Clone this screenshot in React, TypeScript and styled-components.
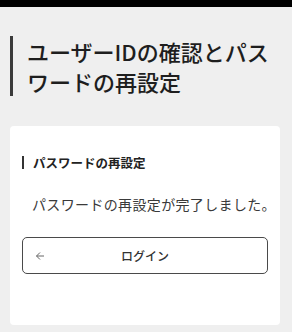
import React from 'react';
import styled, { createGlobalStyle } from 'styled-components';

const GlobalStyle = createGlobalStyle`
  html, body {
    margin: 0;
    padding: 0;
    background: #efefef;
    font-family: "Noto Sans CJK JP", "Noto Sans", sans-serif;
    color: #222222;
  }
`;

const TopBar = styled.div`
  height: 7px;
  background: #000000;
`;

const Page = styled.main`
  padding: 29px 12px 10px 10px;
`;

const PageTitle = styled.h1`
  margin: 0;
  padding-left: 14px;
  border-left: 3px solid #3a3a3a;
  font-size: 22px;
  font-weight: 500;
  line-height: 30px;
  color: #1e1e1e;
`;

const Card = styled.section`
  margin-top: 30px;
  background: #ffffff;
  border-radius: 4px;
  padding: 30px 12px 51px 12px;
`;

const CardHeading = styled.h2`
  margin: 0;
  padding-left: 9px;
  border-left: 2px solid #333333;
  font-size: 12.5px;
  font-weight: 700;
  line-height: 13px;
  color: #222222;
`;

const Message = styled.p`
  margin: 25px 0 0 10px;
  font-size: 14px;
  letter-spacing: 0.35px;
  white-space: nowrap;
  line-height: 20px;
  color: #3a3a3a;
`;

const LoginButton = styled.button`
  margin-top: 23px;
  width: 100%;
  height: 37px;
  position: relative;
  display: flex;
  align-items: center;
  justify-content: center;
  background: #ffffff;
  border: 1.5px solid #4a4a4a;
  border-radius: 5px;
  font-family: inherit;
  font-size: 12px;
  font-weight: 500;
  color: #333333;
  cursor: pointer;
`;

const ArrowIcon = styled.svg`
  position: absolute;
  left: 12px;
  top: 50%;
  transform: translateY(-50%);
`;

const App: React.FC = () => (
  <>
    <GlobalStyle />
    <TopBar />
    <Page>
      <PageTitle>ユーザーIDの確認とパスワードの再設定</PageTitle>
      <Card>
        <CardHeading>パスワードの再設定</CardHeading>
        <Message>パスワードの再設定が完了しました。</Message>
        <LoginButton type="button">
          <ArrowIcon width="10" height="10" viewBox="0 0 10 10" fill="none">
            <path d="M9 5H1.5M5 1.5L1.5 5L5 8.5" stroke="#666666" strokeWidth="1" />
          </ArrowIcon>
          ログイン
        </LoginButton>
      </Card>
    </Page>
  </>
);

export default App;
